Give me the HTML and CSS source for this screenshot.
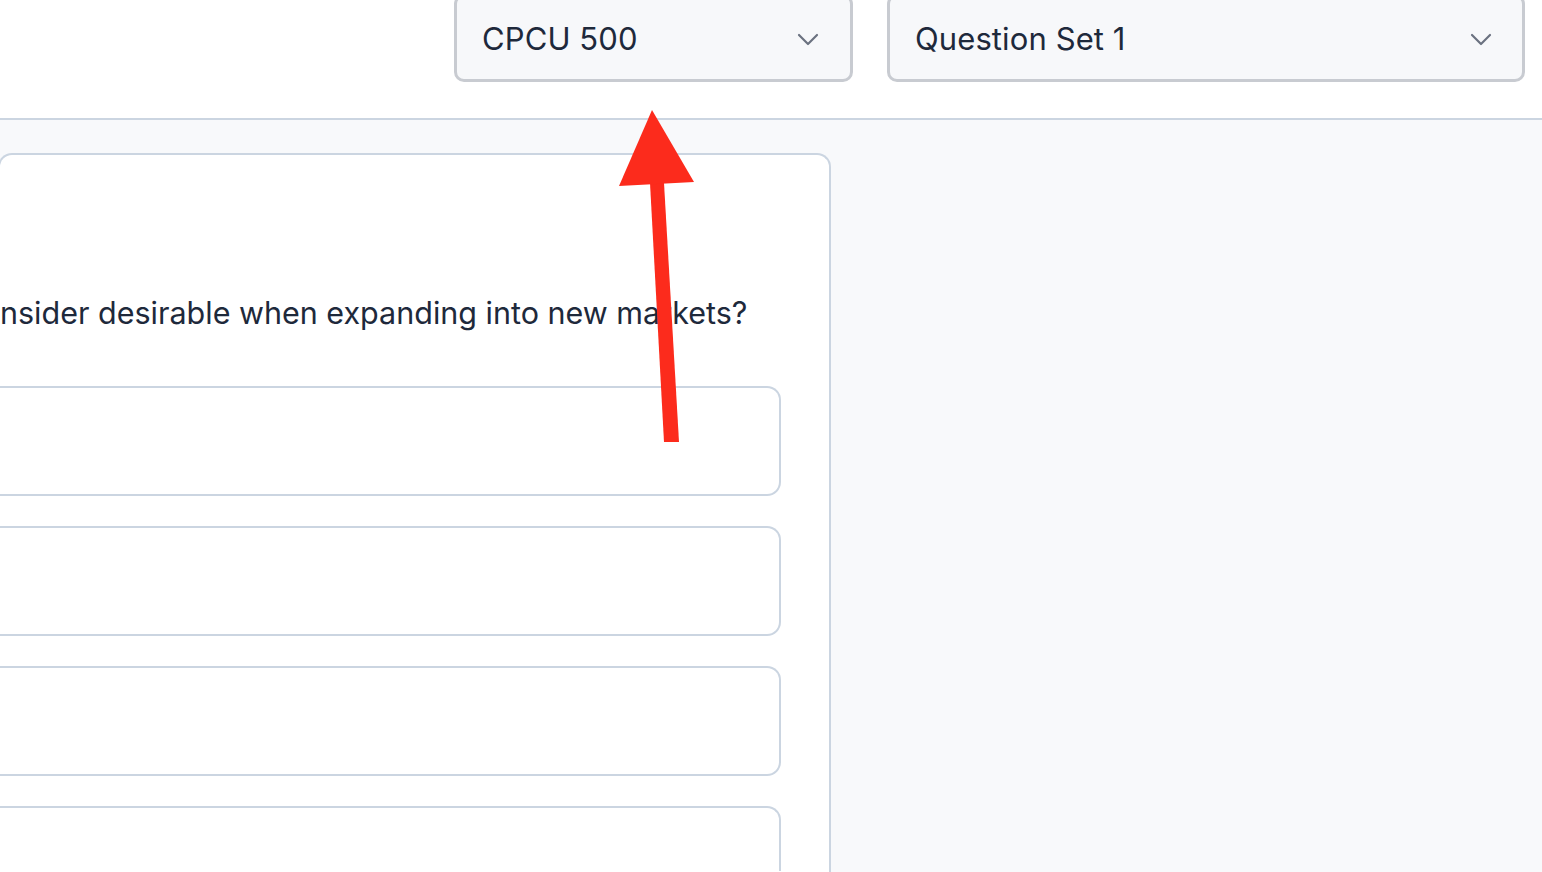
FILE: index.html
```html
<!DOCTYPE html>
<html>
<head>
<meta charset="utf-8">
<link rel="stylesheet" href="styles.css">
</head>
<body>
<header class="topbar">
  <div class="select select-course">
    <span class="select-label">CPCU 500</span>
    <svg class="chev" width="22" height="14" viewBox="0 0 22 14"><path d="M2 2 L11 11 L20 2" fill="none" stroke="#6b7280" stroke-width="2.2" stroke-linecap="round" stroke-linejoin="round"/></svg>
  </div>
  <div class="select select-set">
    <span class="select-label">Question Set 1</span>
    <svg class="chev" width="22" height="14" viewBox="0 0 22 14"><path d="M2 2 L11 11 L20 2" fill="none" stroke="#6b7280" stroke-width="2.2" stroke-linecap="round" stroke-linejoin="round"/></svg>
  </div>
</header>
<main class="main">
  <section class="card">
    <p class="question">nsider desirable when expanding into new markets?</p>
    <div class="options">
      <div class="option"></div>
      <div class="option"></div>
      <div class="option"></div>
      <div class="option option-last"></div>
    </div>
  </section>
</main>
<svg class="arrow" width="1542" height="872" viewBox="0 0 1542 872">
  <polygon points="650,183 664,183 679,442 664,442" fill="#fc2b1c"/>
  <polygon points="652,110 694,182 619,186" fill="#fc2b1c"/>
</svg>
</body>
</html>
```
FILE: styles.css
```css
* { box-sizing: border-box; }
html, body { margin: 0; padding: 0; }
body {
  width: 1542px;
  height: 872px;
  overflow: hidden;
  background: #f8f9fb;
  font-family: Inter, "Noto Sans", sans-serif;
  color: #1e293b;
  position: relative;
}
.topbar {
  height: 120px;
  background: #ffffff;
  border-bottom: 2px solid #cbd5e1;
  display: flex;
  justify-content: flex-end;
  align-items: flex-start;
  gap: 34px;
  padding-right: 17px;
}
.select {
  margin-top: -6px;
  height: 88px;
  background: #f7f8fa;
  border: 3px solid #c8cbd1;
  border-radius: 10px;
  display: flex;
  align-items: center;
  justify-content: space-between;
  padding: 0 31px 0 25px;
}
.select-course { width: 399px; }
.select-set { width: 638px; padding-right: 30px; }
.select-label {
  font-size: 31px;
  letter-spacing: 0.1px;
  color: #1e293b;
}
.chev { display: block; margin-top: 4px; }
.main {
  padding-top: 33px;
}
.card {
  width: 833px;
  margin-left: -2px;
  height: 719px;
  background: #ffffff;
  border: 2px solid #cbd5e1;
  border-bottom: none;
  border-radius: 14px 14px 0 0;
  padding: 0 48px 0 0;
  overflow: hidden;
}
.question {
  margin: 0;
  padding: 138px 0 0 0;
  font-size: 30.5px;
  line-height: 40px;
  color: #1e293b;
}
.options {
  margin-top: 53px;
  display: flex;
  flex-direction: column;
  gap: 30px;
}
.option {
  height: 110px;
  border: 2px solid #cbd5e1;
  border-left: none;
  border-radius: 0 14px 14px 0;
  background: #fff;
  flex: none;
}
.option-last {
  height: 65px;
  border-bottom: none;
  border-radius: 0 14px 0 0;
}
.arrow {
  position: absolute;
  left: 0;
  top: 0;
  pointer-events: none;
}
```
